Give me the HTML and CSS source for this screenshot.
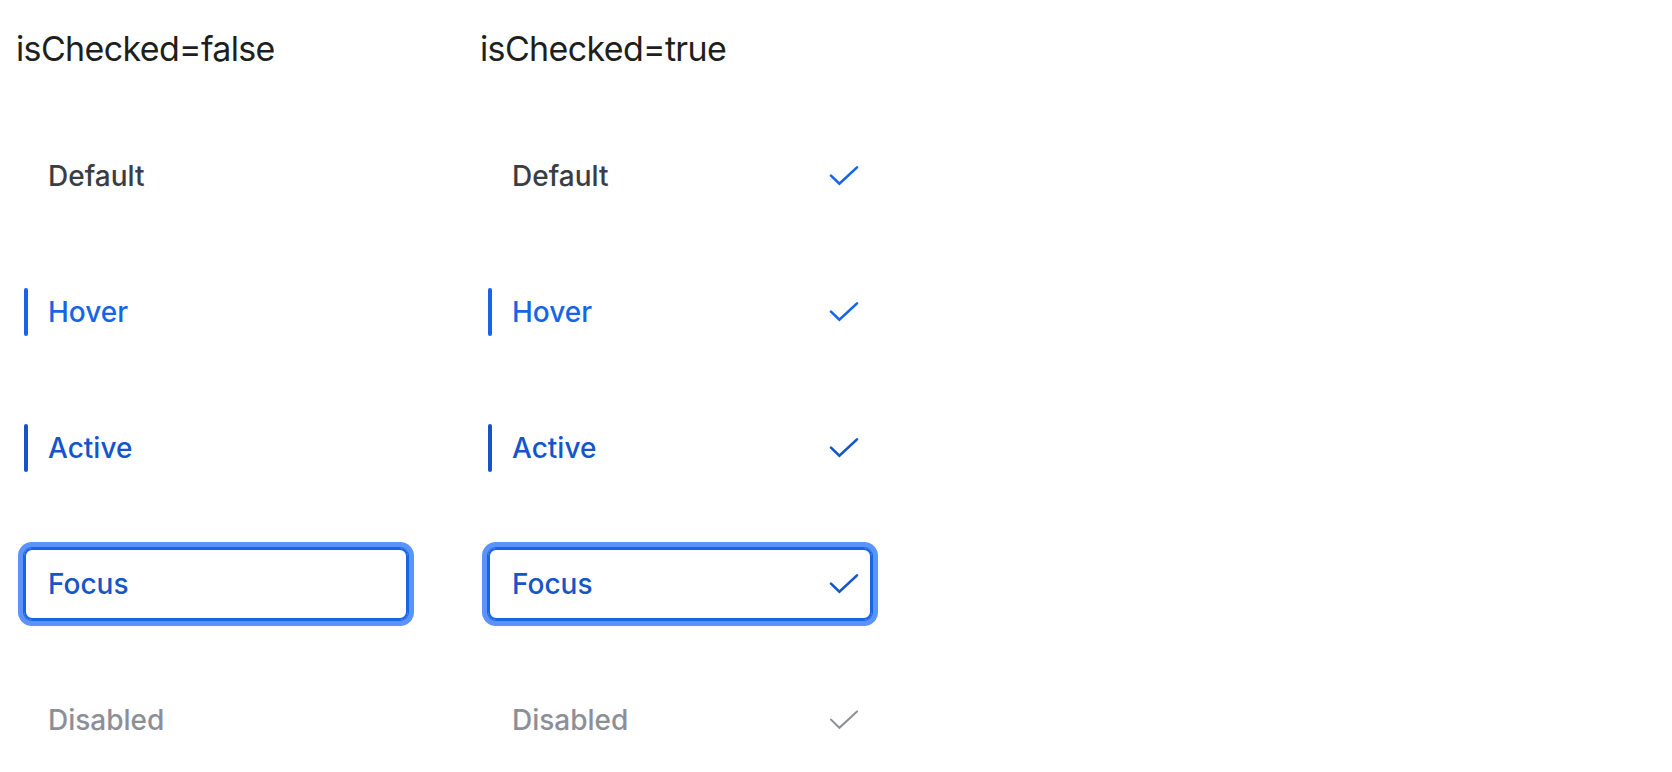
FILE: index.html
```html
<!DOCTYPE html>
<html lang="en">
<head>
<meta charset="utf-8">
<title>Menu item states</title>
<link rel="stylesheet" href="styles.css">
</head>
<body>
<div class="page">
  <section class="col">
    <h2 class="title">isChecked=false</h2>
    <div class="rows">
      <div class="item default"><span class="label">Default</span></div>
      <div class="item hover"><span class="label">Hover</span></div>
      <div class="item active"><span class="label">Active</span></div>
      <div class="item focus"><span class="label">Focus</span></div>
      <div class="item disabled"><span class="label">Disabled</span></div>
    </div>
  </section>
  <section class="col">
    <h2 class="title">isChecked=true</h2>
    <div class="rows">
      <div class="item default"><span class="label">Default</span>
        <svg class="check" viewBox="0 0 30 22" aria-hidden="true"><path d="M2 10.6 L10.4 18.8 L28 2.4"/></svg></div>
      <div class="item hover"><span class="label">Hover</span>
        <svg class="check" viewBox="0 0 30 22" aria-hidden="true"><path d="M2 10.6 L10.4 18.8 L28 2.4"/></svg></div>
      <div class="item active"><span class="label">Active</span>
        <svg class="check" viewBox="0 0 30 22" aria-hidden="true"><path d="M2 10.6 L10.4 18.8 L28 2.4"/></svg></div>
      <div class="item focus"><span class="label">Focus</span>
        <svg class="check" viewBox="0 0 30 22" aria-hidden="true"><path d="M2 10.6 L10.4 18.8 L28 2.4"/></svg></div>
      <div class="item disabled"><span class="label">Disabled</span>
        <svg class="check" viewBox="0 0 30 22" aria-hidden="true"><path d="M2 10.6 L10.4 18.8 L28 2.4"/></svg></div>
    </div>
  </section>
</div>
</body>
</html>
```

FILE: styles.css
```css
html, body {
  margin: 0;
  padding: 0;
  background: #ffffff;
}

body {
  font-family: Inter, "Noto Sans", "Liberation Sans", sans-serif;
}

.page {
  display: flex;
  padding: 29px 0 0 16px;
}

.col {
  width: 464px;
  display: flex;
  flex-direction: column;
}

.title {
  margin: 0;
  font-size: 34px;
  line-height: 40px;
  font-weight: 400;
  color: #1f1f21;
  letter-spacing: -0.65px;
}

.rows {
  margin: 71px 0 0 8px;
  display: flex;
  flex-direction: column;
  gap: 64px;
}

.item {
  position: relative;
  width: 384px;
  height: 72px;
  box-sizing: border-box;
  padding: 0 13px 0 24px;
  display: flex;
  align-items: center;
  justify-content: space-between;
  border-radius: 8px;
  font-size: 28px;
  font-weight: 500;
  color: #3b3d42;
}

.label {
  line-height: 36px;
}

.check {
  width: 30px;
  height: 22px;
  fill: none;
  stroke: #1764e6;
  stroke-width: 2.6;
  stroke-linecap: round;
  stroke-linejoin: miter;
}

.hover {
  color: #1764e6;
}

.active,
.focus {
  color: #1456c8;
}

.active .check,
.focus .check {
  stroke: #1456c8;
}

.hover::before,
.active::before {
  content: "";
  position: absolute;
  left: 0;
  top: 12px;
  width: 3.5px;
  height: 48px;
  border-radius: 2px;
  background: #1764e6;
}

.active::before {
  background: #1456c8;
}

.focus {
  box-shadow: inset 0 0 0 2px #1764e6, 0 0 0 1px #1764e6, 0 0 0 6px #5a93fa;
}

.disabled {
  color: #8c8f97;
}

.disabled .check {
  stroke: #8c8f97;
  stroke-width: 2;
}
```
